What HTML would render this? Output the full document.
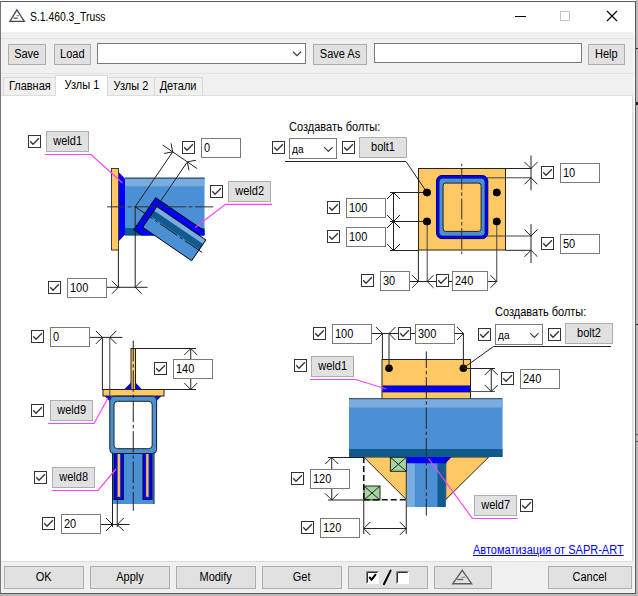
<!DOCTYPE html>
<html><head><meta charset="utf-8">
<style>
html,body{margin:0;padding:0;}
body{width:638px;height:596px;position:relative;overflow:hidden;background:#fff;font-family:"Liberation Sans",sans-serif;font-size:12px;color:#000;}
.abs{position:absolute;box-sizing:border-box;}
.btn{position:absolute;box-sizing:border-box;background:#e1e1e1;border:1px solid #adadad;text-align:center;font-size:12px;line-height:18px;white-space:nowrap;}
.inp{position:absolute;box-sizing:border-box;background:#fff;border:1px solid #7a7a7a;font-size:12px;line-height:18px;padding-left:2px;white-space:nowrap;}
.cb{position:absolute;box-sizing:border-box;width:13px;height:13px;background:#fff;border:1px solid #333;}
.cb svg{position:absolute;left:0;top:0;}
.tab{position:absolute;box-sizing:border-box;background:#f0f0f0;border:1px solid #d9d9d9;border-bottom:none;text-align:center;font-size:12px;line-height:17px;white-space:nowrap;}
.lbl{position:absolute;font-size:12px;white-space:nowrap;}
.t{display:inline-block;transform:scaleX(.917);}
.inp .t,.lbl .t{transform-origin:0 50%;}
</style></head><body>
<!-- outer shadow/backdrop -->
<div class="abs" style="left:0;top:0;width:638px;height:596px;background:#fff;"></div>
<div class="abs" style="left:0;top:594px;width:638px;height:2px;background:#b9b9b9;"></div>
<div class="abs" style="left:636px;top:0;width:2px;height:596px;background:#b8b8bb;"></div>
<div class="abs" style="left:634px;top:2px;width:1px;height:591px;background:#fafafa;z-index:3;"></div>
<div class="abs" style="left:636px;top:48px;width:2px;height:1px;background:#222;"></div><div class="abs" style="left:636px;top:102px;width:2px;height:3px;background:#222;"></div><div class="abs" style="left:636px;top:324px;width:2px;height:1px;background:#333;"></div><div class="abs" style="left:636px;top:434px;width:2px;height:1px;background:#555;"></div><div class="abs" style="left:636px;top:441px;width:2px;height:1px;background:#555;"></div>
<!-- window -->
<div class="abs" id="win" style="left:0;top:1px;width:636px;height:593px;background:#f0f0f0;border:1px solid #5a5a5a;border-left-color:#777;"></div>
<!-- title -->
<div class="abs" style="left:1px;top:2px;width:634px;height:30px;background:#fff;"></div>
<svg class="abs" style="left:0;top:0" width="638" height="40">
 <path d="M16.9 9.8 L24.3 21.400 L9.9 21.400 Z" fill="none" stroke="#4a4a4a" stroke-width="1.3" stroke-linejoin="miter"/>
 <path d="M13.6 18.2 L17.7 18.2" stroke="#4a4a4a" stroke-width="1.2"/><path d="M16.5 15.700 L19 15.700" stroke="#6a6a6a" stroke-width="0.9"/>
 <path d="M515 16.500 H526" stroke="#000" stroke-width="1"/>
 <rect x="560.5" y="11.500" width="9" height="9" fill="none" stroke="#c4c4c4" stroke-width="1"/>
 <path d="M607 11 L617 21 M617 11 L607 21" stroke="#000" stroke-width="1.15"/>
</svg>
<div class="lbl" style="left:30px;top:10px;font-size:12px;transform:scaleX(0.862);transform-origin:0 0;">S.1.460.3_Truss</div>
<!-- separators -->
<div class="abs" style="left:1px;top:38px;width:634px;height:1px;background:#e3e3e3;"></div>
<div class="abs" style="left:1px;top:73px;width:634px;height:1px;background:#e3e3e3;"></div>
<!-- toolbar -->
<div class="btn" style="left:8px;top:44px;width:38px;height:21px;"><span class="t">Save</span></div>
<div class="btn" style="left:54px;top:44px;width:37px;height:21px;"><span class="t">Load</span></div>
<div class="inp" style="left:97px;top:43px;width:209px;height:21px;"></div>
<svg class="abs" style="left:291px;top:49px" width="12" height="10"><path d="M2 2.700 L6 6.700 L10 2.700" fill="none" stroke="#404040" stroke-width="1.25"/></svg>
<div class="btn" style="left:313px;top:44px;width:54px;height:21px;"><span class="t">Save As</span></div>
<div class="inp" style="left:374px;top:43px;width:208px;height:20px;"></div>
<div class="btn" style="left:588px;top:44px;width:37px;height:21px;"><span class="t">Help</span></div>
<!-- tab body -->
<div class="abs" style="left:1px;top:95px;width:632px;height:467px;background:#fff;border:1px solid #dcdcdc;border-left:none;"></div>
<!-- tabs -->
<div class="tab" style="left:3px;top:77px;width:53px;height:18px;"><span class="t">Главная</span></div>
<div class="tab" style="left:107px;top:77px;width:48px;height:18px;border-left:none;"><span class="t">Узлы 2</span></div>
<div class="tab" style="left:155px;top:77px;width:48px;height:18px;border-left:none;"><span class="t">Детали</span></div>
<div class="tab" style="left:55px;top:75px;width:53px;height:21px;background:#fff;line-height:19px;"><span class="t">Узлы 1</span></div>
<!-- bottom buttons -->
<div class="btn" style="left:4px;top:566px;width:80px;height:23px;line-height:20px;"><span class="t">OK</span></div>
<div class="btn" style="left:90px;top:566px;width:80px;height:23px;line-height:20px;"><span class="t">Apply</span></div>
<div class="btn" style="left:176px;top:566px;width:80px;height:23px;line-height:20px;"><span class="t">Modify</span></div>
<div class="btn" style="left:262px;top:566px;width:80px;height:23px;line-height:20px;"><span class="t">Get</span></div>
<div class="btn" style="left:348px;top:566px;width:80px;height:23px;"></div>

<div class="btn" style="left:434px;top:566px;width:58px;height:23px;"></div>
<svg class="abs" style="left:348px;top:566px" width="150" height="23">
 <rect x="18" y="5" width="13" height="13" fill="#fff"/>
 <path d="M18.500 17.500 V5.500 H30.500" fill="none" stroke="#808080" stroke-width="1"/>
 <path d="M19.500 16.500 V6.500 H29.500" fill="none" stroke="#303030" stroke-width="1"/>
 <path d="M21.200 11 L23.600 13.600 L27.900 8.200" fill="none" stroke="#000" stroke-width="2"/>
 <path d="M42.600 4.600 L35.900 18.200" stroke="#000" stroke-width="2" stroke-linecap="round"/>
 <rect x="48" y="5" width="13" height="13" fill="#fff"/>
 <path d="M48.500 17.500 V5.500 H60.500" fill="none" stroke="#808080" stroke-width="1"/>
 <path d="M49.500 16.500 V6.500 H59.500" fill="none" stroke="#303030" stroke-width="1"/>
 <path d="M114.300 4.300 L123.600 17.700 L104.800 17.700 Z" fill="none" stroke="#5e5e5e" stroke-width="1.4"/>
 <path d="M109.200 13.500 L115.300 13.500" stroke="#5e5e5e" stroke-width="1.3"/><path d="M113.400 11.200 L117.200 11.200" stroke="#777" stroke-width="0.9"/>
</svg>
<div class="btn" style="left:548px;top:566px;width:84px;height:23px;line-height:20px;"><span class="t">Cancel</span></div>
<svg class="abs" style="left:0;top:0" width="638" height="596">
<defs><clipPath id="beam1"><rect x="125" y="178" width="79.5" height="57.5"/></clipPath></defs>
<rect x="125" y="177.7" width="79.5" height="57.8" rx="0" fill="#4b90d4" stroke="none" stroke-width="1"/>
<rect x="125" y="177.7" width="79.5" height="8.6" rx="0" fill="#7aacdf" stroke="none" stroke-width="1"/>
<rect x="125" y="228" width="79.5" height="7.5" rx="0" fill="#115a8e" stroke="none" stroke-width="1"/>
<path d="M125 178.2 L204.5 178.2" stroke="#2a3f55" stroke-width="1" fill="none" />
<rect x="111.5" y="168.5" width="7" height="81.5" rx="0" fill="#ffc864" stroke="#2a2a2a" stroke-width="0.9"/>
<path d="M119 172.5 L125 178.5 L125 234.5 L119 241 Z" fill="#0000ff" stroke="none" stroke-width="1" />
<path d="M155.66 197.67 L226.71 246.13 L204.84 278.18 L133.8 229.72 Z" fill="#0000ff" stroke="#000" stroke-width="1" clip-path="url(#beam1)"/>
<path d="M156.9 206.5 L205.89 239.92 L191.69 260.73 L142.7 227.32 Z" fill="#4b90d4" stroke="none" stroke-width="1" />
<path d="M156.9 206.5 L205.89 239.92 L203.07 244.05 L154.08 210.63 Z" fill="#7aacdf" stroke="none" stroke-width="1" />
<path d="M154.08 210.63 L203.07 244.05 L199.41 249.42 L150.42 216.0 Z" fill="#115a8e" stroke="none" stroke-width="1" />
<path d="M156.9 206.5 L205.89 239.92 L191.69 260.73 L142.7 227.32 Z" fill="none" stroke="#000" stroke-width="1" />
<path d="M107.1 206.85 L213.4 206.85" stroke="#333" stroke-width="1" fill="none" stroke-dasharray="21.8 2.4 3.9 2.4" stroke-dashoffset="3.6"/>
<path d="M135.2 206.8 L202.94006014865263 253.00913601288087" stroke="#111" stroke-width="1" fill="none" stroke-dasharray="21 3 3 3"/>
<path d="M135.2 206.8 L172.6744822543485 151.8644634160317" stroke="#222" stroke-width="1" fill="none" />
<path d="M156.9 206.5 L187.04864361816007 162.30374124447664" stroke="#222" stroke-width="1" fill="none" />
<path d="M162.76130272039933 145.10215082878085 L197.25691652598147 168.63346312304162" stroke="#222" stroke-width="1" fill="none" />
<path d="M164.2 153.47 L172.6744822543485 151.8644634160317" stroke="#222" stroke-width="1" fill="none" />
<path d="M171.07 143.39 L172.6744822543485 151.8644634160317" stroke="#222" stroke-width="1" fill="none" />
<path d="M195.82 160.27 L187.3437369920323 161.87115053579078" stroke="#222" stroke-width="1" fill="none" />
<path d="M188.95 170.35 L187.3437369920323 161.87115053579078" stroke="#222" stroke-width="1" fill="none" />
<path d="M118.4 250 L118.4 288" stroke="#222" stroke-width="1" fill="none" />
<path d="M135.2 207 L135.2 288" stroke="#222" stroke-width="1" fill="none" />
<path d="M107 287.3 L147.6 287.3" stroke="#222" stroke-width="1" fill="none" />
<path d="M111.9 293.8 L118.4 287.3" stroke="#222" stroke-width="1" fill="none" />
<path d="M111.9 280.8 L118.4 287.3" stroke="#222" stroke-width="1" fill="none" />
<path d="M141.7 280.8 L135.2 287.3" stroke="#222" stroke-width="1" fill="none" />
<path d="M141.7 293.8 L135.2 287.3" stroke="#222" stroke-width="1" fill="none" />
<path d="M45 154.5 L91 154.5 L122.5 183" stroke="#ff40ff" stroke-width="1.2" fill="none"/>
<path d="M272 204.3 L225.5 204.3 L195.2 227.6" stroke="#ff40ff" stroke-width="1.2" fill="none"/>
<rect x="418.5" y="168.5" width="87" height="81.5" rx="0" fill="#ffc864" stroke="#222" stroke-width="1"/>
<rect x="436.5" y="175.5" width="51.3" height="63.1" rx="5.5" fill="#0000ff" stroke="#000080" stroke-width="1"/>
<rect x="439.1" y="178.2" width="45.9" height="57.9" rx="3.5" fill="#4b90d4" stroke="#0a1a60" stroke-width="0.8"/>
<rect x="443.1" y="183.1" width="38" height="48.3" rx="2.5" fill="#ffc864" stroke="#222" stroke-width="1"/>
<path d="M461.75 163.75 L461.75 254" stroke="#333" stroke-width="1" fill="none" stroke-dasharray="21 2.5 3.6 2.5" stroke-dashoffset="24.55"/>
<path d="M285 161.500 L406 161.500 L427 192.500" stroke="#222" fill="none"/>
<circle cx="427" cy="192.5" r="3.8" fill="#000"/>
<circle cx="427" cy="221.5" r="3.8" fill="#000"/>
<circle cx="496.75" cy="192.5" r="3.8" fill="#000"/>
<circle cx="496.75" cy="221.5" r="3.8" fill="#000"/>
<path d="M390 192.5 L427 192.5" stroke="#222" stroke-width="1" fill="none" />
<path d="M390 221.5 L427 221.5" stroke="#222" stroke-width="1" fill="none" />
<path d="M390 250.5 L418 250.5" stroke="#222" stroke-width="1" fill="none" />
<path d="M393.5 192.5 L393.5 250.5" stroke="#222" stroke-width="1" fill="none" />
<path d="M400.0 199.0 L393.5 192.5" stroke="#222" stroke-width="1" fill="none" />
<path d="M387.0 199.0 L393.5 192.5" stroke="#222" stroke-width="1" fill="none" />
<path d="M387.0 215.0 L393.5 221.5" stroke="#222" stroke-width="1" fill="none" />
<path d="M400.0 215.0 L393.5 221.5" stroke="#222" stroke-width="1" fill="none" />
<path d="M400.0 228.0 L393.5 221.5" stroke="#222" stroke-width="1" fill="none" />
<path d="M387.0 228.0 L393.5 221.5" stroke="#222" stroke-width="1" fill="none" />
<path d="M387.0 244.0 L393.5 250.5" stroke="#222" stroke-width="1" fill="none" />
<path d="M400.0 244.0 L393.5 250.5" stroke="#222" stroke-width="1" fill="none" />
<path d="M505.5 168.5 L531.5 168.5" stroke="#222" stroke-width="1" fill="none" />
<path d="M487 177.8 L531.5 177.8" stroke="#444" stroke-width="1" fill="none" />
<path d="M531 155.5 L531 190.3" stroke="#222" stroke-width="1" fill="none" />
<path d="M524.5 162.0 L531 168.5" stroke="#222" stroke-width="1" fill="none" />
<path d="M537.5 162.0 L531 168.5" stroke="#222" stroke-width="1" fill="none" />
<path d="M537.5 184.3 L531 177.8" stroke="#222" stroke-width="1" fill="none" />
<path d="M524.5 184.3 L531 177.8" stroke="#222" stroke-width="1" fill="none" />
<path d="M486 236 L531.5 236" stroke="#444" stroke-width="1" fill="none" />
<path d="M505.5 250.3 L531.5 250.3" stroke="#222" stroke-width="1" fill="none" />
<path d="M531 224.2 L531 263" stroke="#222" stroke-width="1" fill="none" />
<path d="M524.5 229.5 L531 236" stroke="#222" stroke-width="1" fill="none" />
<path d="M537.5 229.5 L531 236" stroke="#222" stroke-width="1" fill="none" />
<path d="M537.5 256.8 L531 250.3" stroke="#222" stroke-width="1" fill="none" />
<path d="M524.5 256.8 L531 250.3" stroke="#222" stroke-width="1" fill="none" />
<path d="M418.4 250 L418.4 282" stroke="#222" stroke-width="1" fill="none" />
<path d="M427.2 221.5 L427.2 282" stroke="#444" stroke-width="1" fill="none" />
<path d="M496.75 221.5 L496.75 282" stroke="#444" stroke-width="1" fill="none" />
<path d="M410 281.5 L436 281.5" stroke="#222" stroke-width="1" fill="none" />
<path d="M449 281.5 L452 281.5" stroke="#222" stroke-width="1" fill="none" />
<path d="M488 281.5 L496.75 281.5" stroke="#222" stroke-width="1" fill="none" />
<path d="M412.1 287.8 L418.4 281.5" stroke="#222" stroke-width="1" fill="none" />
<path d="M412.1 275.2 L418.4 281.5" stroke="#222" stroke-width="1" fill="none" />
<path d="M433.5 275.2 L427.2 281.5" stroke="#222" stroke-width="1" fill="none" />
<path d="M433.5 287.8 L427.2 281.5" stroke="#222" stroke-width="1" fill="none" />
<path d="M490.45 287.8 L496.75 281.5" stroke="#222" stroke-width="1" fill="none" />
<path d="M490.45 275.2 L496.75 281.5" stroke="#222" stroke-width="1" fill="none" />
<circle cx="427" cy="192.5" r="3.8" fill="#000"/>
<circle cx="427" cy="221.5" r="3.8" fill="#000"/>
<circle cx="496.75" cy="192.5" r="3.8" fill="#000"/>
<circle cx="496.75" cy="221.5" r="3.8" fill="#000"/>
<path d="M90 337.4 L122.5 337.4" stroke="#222" stroke-width="1" fill="none" />
<path d="M95.9 343.9 L102.4 337.4" stroke="#222" stroke-width="1" fill="none" />
<path d="M95.9 330.9 L102.4 337.4" stroke="#222" stroke-width="1" fill="none" />
<path d="M116.3 330.9 L109.8 337.4" stroke="#222" stroke-width="1" fill="none" />
<path d="M116.3 343.9 L109.8 337.4" stroke="#222" stroke-width="1" fill="none" />
<rect x="112.5" y="453" width="41.5" height="51" rx="0" fill="#4b90d4" stroke="none" stroke-width="1"/>
<path d="M112.5 453 L112.5 504" stroke="#123" stroke-width="1" fill="none" />
<path d="M154 453 L154 504" stroke="#123" stroke-width="1" fill="none" />
<rect x="114" y="453" width="9.3" height="46.5" rx="0" fill="#0000ff" stroke="#000040" stroke-width="1"/>
<rect x="143" y="453" width="9" height="46.5" rx="0" fill="#0000ff" stroke="#000040" stroke-width="1"/>
<rect x="117.4" y="453" width="2.8" height="44" rx="0" fill="#ffc864" stroke="#5a4a20" stroke-width="0.6"/>
<rect x="146" y="453" width="2.8" height="44" rx="0" fill="#ffc864" stroke="#5a4a20" stroke-width="0.6"/>
<path d="M124.5 389 L131 382.5 L135.5 382.5 L141.5 389 Z" fill="#0000ff" stroke="none" stroke-width="1" />
<path d="M104.5 396 L111 396 L111 402.5 Z" fill="#0000ff" stroke="none" stroke-width="1" />
<path d="M155 396 L161.5 396 L155 402.5 Z" fill="#0000ff" stroke="none" stroke-width="1" />
<rect x="131" y="348.5" width="4.5" height="41" rx="0" fill="#ffc864" stroke="#222" stroke-width="1"/>
<rect x="103" y="389.5" width="61" height="6.5" rx="0" fill="#ffc864" stroke="#222" stroke-width="1"/>
<rect x="109.8" y="396.3" width="46.8" height="57.2" rx="4" fill="#4b90d4" stroke="#123" stroke-width="1"/>
<rect x="114" y="401.3" width="38.2" height="47.4" rx="3.5" fill="#fff" stroke="#222" stroke-width="1"/>
<path d="M133.25 340.6 L133.25 510.8" stroke="#222" stroke-width="1" fill="none" stroke-dasharray="21.3 2.8 3.5 2.8" stroke-dashoffset="0.6"/>
<path d="M102.4 337.5 L102.4 390" stroke="#222" stroke-width="1" fill="none" />
<path d="M109.8 337.5 L109.8 397" stroke="#444" stroke-width="1" fill="none" />
<path d="M135.5 348.5 L196 348.5" stroke="#222" stroke-width="1" fill="none" />
<path d="M164 389.5 L196 389.5" stroke="#222" stroke-width="1" fill="none" />
<path d="M190.75 348.5 L190.75 389.5" stroke="#222" stroke-width="1" fill="none" />
<path d="M197.25 355.0 L190.75 348.5" stroke="#222" stroke-width="1" fill="none" />
<path d="M184.25 355.0 L190.75 348.5" stroke="#222" stroke-width="1" fill="none" />
<path d="M184.25 383.0 L190.75 389.5" stroke="#222" stroke-width="1" fill="none" />
<path d="M197.25 383.0 L190.75 389.5" stroke="#222" stroke-width="1" fill="none" />
<path d="M48 423.5 L94 423.5 L108 398" stroke="#ff40ff" stroke-width="1.2" fill="none"/>
<path d="M52 490.5 L98 490.5 L116 469" stroke="#ff40ff" stroke-width="1.2" fill="none"/>
<path d="M101 524.5 L129.5 524.5" stroke="#222" stroke-width="1" fill="none" />
<path d="M112.5 504 L112.5 527" stroke="#222" stroke-width="1" fill="none" />
<path d="M117.25 497 L117.25 527" stroke="#222" stroke-width="1" fill="none" />
<path d="M106.0 531.0 L112.5 524.5" stroke="#222" stroke-width="1" fill="none" />
<path d="M106.0 518.0 L112.5 524.5" stroke="#222" stroke-width="1" fill="none" />
<path d="M123.75 518.0 L117.25 524.5" stroke="#222" stroke-width="1" fill="none" />
<path d="M123.75 531.0 L117.25 524.5" stroke="#222" stroke-width="1" fill="none" />
<rect x="382" y="359.5" width="88.5" height="39" rx="0" fill="#ffc864" stroke="#222" stroke-width="1"/>
<rect x="382.5" y="386" width="87.5" height="6" rx="0" fill="#0000ff" stroke="none" stroke-width="1"/>
<path d="M382.5 385.8 L470 385.8" stroke="#000050" stroke-width="0.7" fill="none" />
<path d="M382.5 392 L470 392" stroke="#000050" stroke-width="0.7" fill="none" />
<circle cx="389" cy="368.3" r="3.8" fill="#000"/>
<circle cx="463.4" cy="368.3" r="3.8" fill="#000"/>
<path d="M372 333.5 L398 333.5" stroke="#222" stroke-width="1" fill="none" />
<path d="M411 333.5 L415 333.5" stroke="#222" stroke-width="1" fill="none" />
<path d="M455 333.5 L463.5 333.5" stroke="#222" stroke-width="1" fill="none" />
<path d="M375.9 340.0 L382.4 333.5" stroke="#222" stroke-width="1" fill="none" />
<path d="M375.9 327.0 L382.4 333.5" stroke="#222" stroke-width="1" fill="none" />
<path d="M395.5 327.0 L389 333.5" stroke="#222" stroke-width="1" fill="none" />
<path d="M395.5 340.0 L389 333.5" stroke="#222" stroke-width="1" fill="none" />
<path d="M456.9 340.0 L463.4 333.5" stroke="#222" stroke-width="1" fill="none" />
<path d="M456.9 327.0 L463.4 333.5" stroke="#222" stroke-width="1" fill="none" />
<path d="M382.4 333.5 L382.4 359" stroke="#222" stroke-width="1" fill="none" />
<path d="M389 333.5 L389 368" stroke="#222" stroke-width="1" fill="none" />
<path d="M463.4 333.5 L463.4 368" stroke="#222" stroke-width="1" fill="none" />
<path d="M611 346.500 L493.500 346.500 L463.500 368" stroke="#222" fill="none"/>
<path d="M463.5 368.5 L495 368.5" stroke="#222" stroke-width="1" fill="none" />
<path d="M470.5 391.5 L495 391.5" stroke="#555" stroke-width="1" fill="none" />
<path d="M491.25 368.5 L491.25 391.5" stroke="#222" stroke-width="1" fill="none" />
<path d="M497.75 375.0 L491.25 368.5" stroke="#222" stroke-width="1" fill="none" />
<path d="M484.75 375.0 L491.25 368.5" stroke="#222" stroke-width="1" fill="none" />
<path d="M484.75 385.0 L491.25 391.5" stroke="#222" stroke-width="1" fill="none" />
<path d="M497.75 385.0 L491.25 391.5" stroke="#222" stroke-width="1" fill="none" />
<path d="M363.75 457 L406.25 457 L406.25 499.5 Z" fill="#ffc864" stroke="#222" stroke-width="1" />
<path d="M445.75 457 L488.75 457 L445.75 499.5 Z" fill="#ffc864" stroke="#222" stroke-width="1" />
<rect x="407" y="457" width="38.8" height="50" rx="0" fill="#4b90d4" stroke="none" stroke-width="1"/>
<rect x="407" y="457" width="7.8" height="50" rx="0" fill="#7aacdf" stroke="none" stroke-width="1"/>
<rect x="437.5" y="457" width="8.25" height="50" rx="0" fill="#115a8e" stroke="none" stroke-width="1"/>
<path d="M406.8 457 L451.5 457 L445.75 463.2 L406.8 463.2 Z" fill="#0000ff" stroke="none" stroke-width="1" />
<path d="M445.8 457 L445.8 463.2" stroke="#001" stroke-width="0.8" fill="none" />
<rect x="349" y="398.5" width="153.5" height="58.5" rx="0" fill="#4b90d4" stroke="none" stroke-width="1"/>
<rect x="349" y="398.5" width="153.5" height="9" rx="0" fill="#7aacdf" stroke="none" stroke-width="1"/>
<rect x="349" y="449" width="153.5" height="8" rx="0" fill="#115a8e" stroke="none" stroke-width="1"/>
<path d="M349 398.7 L502.5 398.7" stroke="#33485e" stroke-width="1" fill="none" />
<rect x="390.4" y="457.3" width="16" height="14" rx="0" fill="#a5d6a0" stroke="#222" stroke-width="1"/>
<path d="M390.4 457.3 L406.4 471.3" stroke="#222" stroke-width="1" fill="none" />
<path d="M406.4 457.3 L390.4 471.3" stroke="#222" stroke-width="1" fill="none" />
<rect x="364" y="486" width="16" height="14" rx="0" fill="#a5d6a0" stroke="#222" stroke-width="1"/>
<path d="M364 486 L380 500" stroke="#222" stroke-width="1" fill="none" />
<path d="M380 486 L364 500" stroke="#222" stroke-width="1" fill="none" />
<path d="M363.75 457 L363.75 499.5" stroke="#111" stroke-width="1.6" fill="none" stroke-dasharray="6 3"/>
<path d="M363.75 499.75 L406.25 499.75" stroke="#111" stroke-width="1.6" fill="none" stroke-dasharray="6 3"/>
<path d="M426.3 351.4 L426.3 515.6" stroke="#222" stroke-width="1" fill="none" stroke-dasharray="21.3 2.8 3.5 2.8" stroke-dashoffset="4.7"/>
<path d="M328 457.5 L363.75 457.5" stroke="#222" stroke-width="1" fill="none" />
<path d="M328 500 L363.75 500" stroke="#222" stroke-width="1" fill="none" />
<path d="M331.75 457.5 L331.75 500" stroke="#222" stroke-width="1" fill="none" />
<path d="M338.25 464.0 L331.75 457.5" stroke="#222" stroke-width="1" fill="none" />
<path d="M325.25 464.0 L331.75 457.5" stroke="#222" stroke-width="1" fill="none" />
<path d="M325.25 493.5 L331.75 500" stroke="#222" stroke-width="1" fill="none" />
<path d="M338.25 493.5 L331.75 500" stroke="#222" stroke-width="1" fill="none" />
<path d="M363.75 500 L363.75 534" stroke="#222" stroke-width="1" fill="none" />
<path d="M406.25 500 L406.25 534" stroke="#222" stroke-width="1" fill="none" />
<path d="M363.75 528.5 L406.25 528.5" stroke="#222" stroke-width="1" fill="none" />
<path d="M370.25 522.0 L363.75 528.5" stroke="#222" stroke-width="1" fill="none" />
<path d="M370.25 535.0 L363.75 528.5" stroke="#222" stroke-width="1" fill="none" />
<path d="M399.75 535.0 L406.25 528.5" stroke="#222" stroke-width="1" fill="none" />
<path d="M399.75 522.0 L406.25 528.5" stroke="#222" stroke-width="1" fill="none" />
<path d="M310 379.5 L355.5 379.5 L386.5 389" stroke="#ff40ff" stroke-width="1.2" fill="none"/>
<path d="M428.5 458.5 L472.5 518.5 L517.5 518.5" stroke="#ff40ff" stroke-width="1.2" fill="none"/>
</svg>
<div class="cb" style="left:28px;top:135px;"><svg style="left:-1px;top:-1px" width="13" height="13" viewBox="0 0 13 13"><path d="M2.2 6.3 L5 9.2 L10.900 3.300" fill="none" stroke="#333" stroke-width="1.3"/></svg></div>
<div class="btn" style="left:46px;top:131px;width:43px;height:21px;"><span class="t">weld1</span></div>
<div class="cb" style="left:182px;top:141px;"><svg style="left:-1px;top:-1px" width="13" height="13" viewBox="0 0 13 13"><path d="M2.2 6.3 L5 9.2 L10.900 3.300" fill="none" stroke="#333" stroke-width="1.3"/></svg></div>
<div class="inp" style="left:201px;top:138px;width:40px;height:20px;"><span class="t">0</span></div>
<div class="cb" style="left:210px;top:185px;"><svg style="left:-1px;top:-1px" width="13" height="13" viewBox="0 0 13 13"><path d="M2.2 6.3 L5 9.2 L10.900 3.300" fill="none" stroke="#333" stroke-width="1.3"/></svg></div>
<div class="btn" style="left:228px;top:181px;width:43px;height:21px;"><span class="t">weld2</span></div>
<div class="cb" style="left:48px;top:281px;"><svg style="left:-1px;top:-1px" width="13" height="13" viewBox="0 0 13 13"><path d="M2.2 6.3 L5 9.2 L10.900 3.300" fill="none" stroke="#333" stroke-width="1.3"/></svg></div>
<div class="inp" style="left:67px;top:278px;width:40px;height:20px;"><span class="t">100</span></div>
<div class="lbl" style="left:289px;top:120px;"><span class="t" style="">Создавать болты:</span></div>
<div class="cb" style="left:272px;top:141px;"><svg style="left:-1px;top:-1px" width="13" height="13" viewBox="0 0 13 13"><path d="M2.2 6.3 L5 9.2 L10.900 3.300" fill="none" stroke="#333" stroke-width="1.3"/></svg></div>
<div class="inp" style="left:289px;top:138px;width:48px;height:21px;padding-left:2px;font-size:11px;line-height:20px;"><span class="t">да</span><svg style="position:absolute;left:32.500px;top:6.500px" width="12" height="8"><path d="M1.2 1.200 L5.400 5.400 L9.600 1.200" fill="none" stroke="#3a3a3a" stroke-width="1.1"/></svg></div>
<div class="cb" style="left:342px;top:141px;"><svg style="left:-1px;top:-1px" width="13" height="13" viewBox="0 0 13 13"><path d="M2.2 6.3 L5 9.2 L10.900 3.300" fill="none" stroke="#333" stroke-width="1.3"/></svg></div>
<div class="btn" style="left:359px;top:137px;width:48px;height:21px;"><span class="t">bolt1</span></div>
<div class="cb" style="left:327px;top:201px;"><svg style="left:-1px;top:-1px" width="13" height="13" viewBox="0 0 13 13"><path d="M2.2 6.3 L5 9.2 L10.900 3.300" fill="none" stroke="#333" stroke-width="1.3"/></svg></div>
<div class="inp" style="left:346px;top:198px;width:40px;height:20px;"><span class="t">100</span></div>
<div class="cb" style="left:327px;top:230px;"><svg style="left:-1px;top:-1px" width="13" height="13" viewBox="0 0 13 13"><path d="M2.2 6.3 L5 9.2 L10.900 3.300" fill="none" stroke="#333" stroke-width="1.3"/></svg></div>
<div class="inp" style="left:346px;top:227px;width:40px;height:20px;"><span class="t">100</span></div>
<div class="cb" style="left:541px;top:166px;"><svg style="left:-1px;top:-1px" width="13" height="13" viewBox="0 0 13 13"><path d="M2.2 6.3 L5 9.2 L10.900 3.300" fill="none" stroke="#333" stroke-width="1.3"/></svg></div>
<div class="inp" style="left:560px;top:163px;width:40px;height:20px;"><span class="t">10</span></div>
<div class="cb" style="left:541px;top:237px;"><svg style="left:-1px;top:-1px" width="13" height="13" viewBox="0 0 13 13"><path d="M2.2 6.3 L5 9.2 L10.900 3.300" fill="none" stroke="#333" stroke-width="1.3"/></svg></div>
<div class="inp" style="left:560px;top:234px;width:40px;height:20px;"><span class="t">50</span></div>
<div class="cb" style="left:361px;top:274px;"><svg style="left:-1px;top:-1px" width="13" height="13" viewBox="0 0 13 13"><path d="M2.2 6.3 L5 9.2 L10.900 3.300" fill="none" stroke="#333" stroke-width="1.3"/></svg></div>
<div class="inp" style="left:380px;top:271px;width:30px;height:20px;"><span class="t">30</span></div>
<div class="cb" style="left:436px;top:274px;"><svg style="left:-1px;top:-1px" width="13" height="13" viewBox="0 0 13 13"><path d="M2.2 6.3 L5 9.2 L10.900 3.300" fill="none" stroke="#333" stroke-width="1.3"/></svg></div>
<div class="inp" style="left:452px;top:271px;width:36px;height:20px;"><span class="t">240</span></div>
<div class="cb" style="left:31px;top:330px;"><svg style="left:-1px;top:-1px" width="13" height="13" viewBox="0 0 13 13"><path d="M2.2 6.3 L5 9.2 L10.900 3.300" fill="none" stroke="#333" stroke-width="1.3"/></svg></div>
<div class="inp" style="left:50px;top:327px;width:40px;height:20px;"><span class="t">0</span></div>
<div class="cb" style="left:154px;top:362px;"><svg style="left:-1px;top:-1px" width="13" height="13" viewBox="0 0 13 13"><path d="M2.2 6.3 L5 9.2 L10.900 3.300" fill="none" stroke="#333" stroke-width="1.3"/></svg></div>
<div class="inp" style="left:173px;top:359px;width:40px;height:20px;"><span class="t">140</span></div>
<div class="cb" style="left:31px;top:404px;"><svg style="left:-1px;top:-1px" width="13" height="13" viewBox="0 0 13 13"><path d="M2.2 6.3 L5 9.2 L10.900 3.300" fill="none" stroke="#333" stroke-width="1.3"/></svg></div>
<div class="btn" style="left:50px;top:400px;width:43px;height:21px;"><span class="t">weld9</span></div>
<div class="cb" style="left:34px;top:471px;"><svg style="left:-1px;top:-1px" width="13" height="13" viewBox="0 0 13 13"><path d="M2.2 6.3 L5 9.2 L10.900 3.300" fill="none" stroke="#333" stroke-width="1.3"/></svg></div>
<div class="btn" style="left:52px;top:467px;width:43px;height:21px;"><span class="t">weld8</span></div>
<div class="cb" style="left:42px;top:517px;"><svg style="left:-1px;top:-1px" width="13" height="13" viewBox="0 0 13 13"><path d="M2.2 6.3 L5 9.2 L10.900 3.300" fill="none" stroke="#333" stroke-width="1.3"/></svg></div>
<div class="inp" style="left:61px;top:514px;width:40px;height:20px;"><span class="t">20</span></div>
<div class="lbl" style="left:495px;top:305px;"><span class="t" style="">Создавать болты:</span></div>
<div class="cb" style="left:313px;top:327px;"><svg style="left:-1px;top:-1px" width="13" height="13" viewBox="0 0 13 13"><path d="M2.2 6.3 L5 9.2 L10.900 3.300" fill="none" stroke="#333" stroke-width="1.3"/></svg></div>
<div class="inp" style="left:332px;top:324px;width:40px;height:20px;"><span class="t">100</span></div>
<div class="cb" style="left:398px;top:327px;"><svg style="left:-1px;top:-1px" width="13" height="13" viewBox="0 0 13 13"><path d="M2.2 6.3 L5 9.2 L10.900 3.300" fill="none" stroke="#333" stroke-width="1.3"/></svg></div>
<div class="inp" style="left:415px;top:324px;width:40px;height:20px;"><span class="t">300</span></div>
<div class="cb" style="left:478px;top:328px;"><svg style="left:-1px;top:-1px" width="13" height="13" viewBox="0 0 13 13"><path d="M2.2 6.3 L5 9.2 L10.900 3.300" fill="none" stroke="#333" stroke-width="1.3"/></svg></div>
<div class="inp" style="left:495px;top:324px;width:48px;height:21px;padding-left:2px;font-size:11px;line-height:20px;"><span class="t">да</span><svg style="position:absolute;left:32.500px;top:6.500px" width="12" height="8"><path d="M1.2 1.200 L5.400 5.400 L9.600 1.200" fill="none" stroke="#3a3a3a" stroke-width="1.1"/></svg></div>
<div class="cb" style="left:548px;top:328px;"><svg style="left:-1px;top:-1px" width="13" height="13" viewBox="0 0 13 13"><path d="M2.2 6.3 L5 9.2 L10.900 3.300" fill="none" stroke="#333" stroke-width="1.3"/></svg></div>
<div class="btn" style="left:565px;top:323px;width:48px;height:21px;"><span class="t">bolt2</span></div>
<div class="cb" style="left:501px;top:372px;"><svg style="left:-1px;top:-1px" width="13" height="13" viewBox="0 0 13 13"><path d="M2.2 6.3 L5 9.2 L10.900 3.300" fill="none" stroke="#333" stroke-width="1.3"/></svg></div>
<div class="inp" style="left:520px;top:369px;width:40px;height:20px;"><span class="t">240</span></div>
<div class="cb" style="left:291px;top:472px;"><svg style="left:-1px;top:-1px" width="13" height="13" viewBox="0 0 13 13"><path d="M2.2 6.3 L5 9.2 L10.900 3.300" fill="none" stroke="#333" stroke-width="1.3"/></svg></div>
<div class="inp" style="left:310px;top:469px;width:40px;height:20px;"><span class="t">120</span></div>
<div class="cb" style="left:301px;top:521px;"><svg style="left:-1px;top:-1px" width="13" height="13" viewBox="0 0 13 13"><path d="M2.2 6.3 L5 9.2 L10.900 3.300" fill="none" stroke="#333" stroke-width="1.3"/></svg></div>
<div class="inp" style="left:320px;top:518px;width:40px;height:20px;"><span class="t">120</span></div>
<div class="cb" style="left:294px;top:359px;"><svg style="left:-1px;top:-1px" width="13" height="13" viewBox="0 0 13 13"><path d="M2.2 6.3 L5 9.2 L10.900 3.300" fill="none" stroke="#333" stroke-width="1.3"/></svg></div>
<div class="btn" style="left:311px;top:356px;width:43px;height:21px;"><span class="t">weld1</span></div>
<div class="btn" style="left:474px;top:495px;width:43px;height:21px;"><span class="t">weld7</span></div>
<div class="cb" style="left:520px;top:499px;"><svg style="left:-1px;top:-1px" width="13" height="13" viewBox="0 0 13 13"><path d="M2.2 6.3 L5 9.2 L10.900 3.300" fill="none" stroke="#333" stroke-width="1.3"/></svg></div>
<div class="lbl" style="left:473px;top:543px;color:#0000ff;text-decoration:underline;"><span class="t" style="color:#0000ff;text-decoration:underline;">Автоматизация от SAPR-ART</span></div>

</body></html>
